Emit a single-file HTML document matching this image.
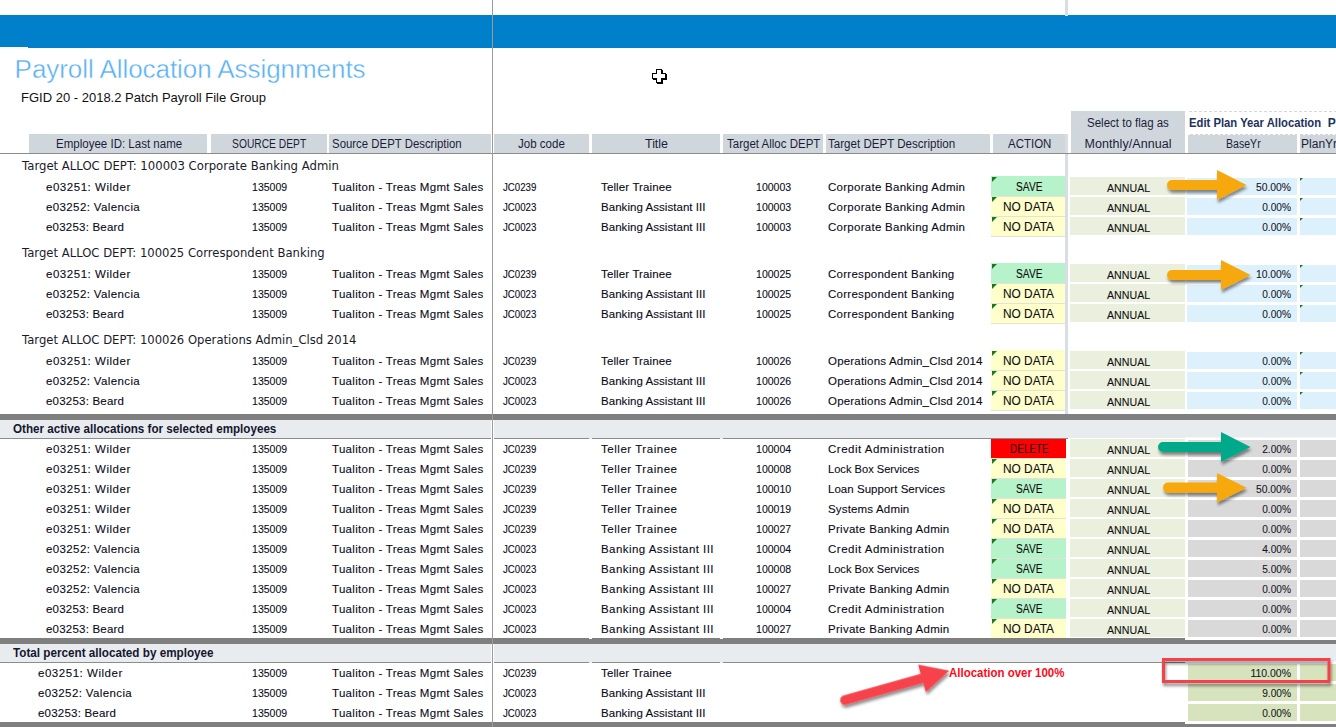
<!DOCTYPE html>
<html lang="en"><head><meta charset="utf-8"><title>Payroll Allocation Assignments</title>
<style>
html,body{margin:0;padding:0;background:#fff;}
body{width:1336px;height:727px;overflow:hidden;position:relative;font-family:"Liberation Sans",sans-serif;color:#141428;}
.a{position:absolute;white-space:pre;}
.b{position:absolute;}
.t{font-size:11.5px;line-height:20px;height:20px;color:#0a0a18;-webkit-text-stroke:0.1px #0a0a18;}
.h{font-size:12.5px;line-height:18px;height:18px;color:#1c1c3a;}
.g{font-family:"DejaVu Sans","Liberation Sans",sans-serif;font-size:13px;line-height:20px;height:20px;color:#1a1a2a;}
.s{font-size:12px;line-height:18px;color:#15152e;}
</style></head>
<body>
<div class="b" style="left:0px;top:15px;width:1336px;height:33px;background:#0080cb;"></div>
<div class="b" style="left:0px;top:47px;width:28px;height:1px;background:#fff;"></div>
<div class="b" style="left:1065px;top:0px;width:3px;height:16px;background:#d9dee4;"></div>
<div class="b" style="left:1065px;top:134px;width:3px;height:280px;background:#d9dee4;"></div>
<div class="a " style="letter-spacing:-0.056px;left:14.6px;top:53px;font-size:26px;line-height:32px;color:#58b0f4;-webkit-text-stroke:0.4px #fff;">Payroll Allocation Assignments</div>
<div class="a " style="letter-spacing:0.001px;left:21px;top:90px;font-size:13px;line-height:16px;color:#111;">FGID 20 - 2018.2 Patch Payroll File Group</div>
<div class="b" style="left:29px;top:134px;width:178px;height:19px;background:#cfd7dd;"></div>
<div class="a h" style="left:56px;transform:scaleX(0.9212);transform-origin:0.5px 50%;top:135px;font-size:12.5px;">Employee ID: Last name</div>
<div class="b" style="left:211px;top:134px;width:116px;height:19px;background:#cfd7dd;"></div>
<div class="a h" style="left:232px;transform:scaleX(0.8204);transform-origin:0.5px 50%;top:135px;font-size:12.5px;">SOURCE DEPT</div>
<div class="b" style="left:329px;top:134px;width:162px;height:19px;background:#cfd7dd;"></div>
<div class="a h" style="left:332px;transform:scaleX(0.9114);transform-origin:0.5px 50%;top:135px;font-size:12.5px;">Source DEPT Description</div>
<div class="b" style="left:494px;top:134px;width:95px;height:19px;background:#cfd7dd;"></div>
<div class="a h" style="left:517.75px;transform:scaleX(0.9233);transform-origin:0.5px 50%;top:135px;font-size:12.5px;">Job code</div>
<div class="b" style="left:592px;top:134px;width:128px;height:19px;background:#cfd7dd;"></div>
<div class="a h" style="letter-spacing:-0.039px;left:645px;top:135px;font-size:12.5px;">Title</div>
<div class="b" style="left:723px;top:134px;width:100px;height:19px;background:#cfd7dd;"></div>
<div class="a h" style="left:726.75px;transform:scaleX(0.9202);transform-origin:0.5px 50%;top:135px;font-size:12.5px;">Target Alloc DEPT</div>
<div class="b" style="left:826px;top:134px;width:164px;height:19px;background:#cfd7dd;"></div>
<div class="a h" style="left:828px;transform:scaleX(0.9255);transform-origin:0.5px 50%;top:135px;font-size:12.5px;">Target DEPT Description</div>
<div class="b" style="left:993px;top:134px;width:72px;height:19px;background:#cfd7dd;"></div>
<div class="a h" style="left:1007.5px;transform:scaleX(0.9176);transform-origin:0.5px 50%;top:135px;font-size:12.5px;">ACTION</div>
<div class="b" style="left:1188px;top:134px;width:109px;height:19px;background:#cfd7dd;"></div>
<div class="a h" style="left:1225.5px;transform:scaleX(0.8435);transform-origin:0.5px 50%;top:135px;font-size:12.5px;">BaseYr</div>
<div class="b" style="left:1300px;top:134px;width:36px;height:19px;background:#cfd7dd;"></div>
<div class="a h" style="left:1300.75px;transform:scaleX(0.9618);transform-origin:0.5px 50%;top:135px;font-size:12.5px;">PlanYr</div>
<div class="b" style="left:1071px;top:111px;width:114px;height:42px;background:#cfd7dd;"></div>
<div class="a h" style="left:1087px;transform:scaleX(0.9201);transform-origin:0.5px 50%;top:114px;font-size:12.5px;">Select to flag as</div>
<div class="a h" style="letter-spacing:0.064px;left:1084.5px;top:135px;font-size:12.5px;">Monthly/Annual</div>
<div class="b" style="left:1189px;top:111px;width:147px;height:1px;background:repeating-linear-gradient(90deg,#d3d9de 0,#d3d9de 3px,transparent 3px,transparent 5px);"></div>
<div class="b" style="left:1188px;top:134px;width:148px;height:1px;background:repeating-linear-gradient(90deg,#fff 0,#fff 2px,transparent 2px,transparent 5px);"></div>
<div class="a h" style="left:1189px;transform:scaleX(0.9387);transform-origin:0.5px 50%;top:114px;font-size:12px;font-weight:700;color:#22325c;">Edit Plan Year Allocation</div>
<div class="a h" style="left:1327.75px;top:114px;font-size:12px;font-weight:700;color:#22325c;">Pe</div>
<div class="b" style="left:0px;top:153px;width:1336px;height:1px;background:#8c8c8c;"></div>
<div class="a g" style="left:21.5px;transform:scaleX(0.8977);transform-origin:0.5px 50%;top:156px;font-size:13px;">Target ALLOC DEPT: 100003 Corporate Banking Admin</div>
<div class="a t" style="letter-spacing:0.53px;left:46px;top:177px;font-size:11.5px;">e03251: Wilder</div>
<div class="a t" style="left:252px;transform:scaleX(0.9144);transform-origin:0.5px 50%;top:177px;font-size:11.5px;">135009</div>
<div class="a t" style="letter-spacing:0.303px;left:332px;top:177px;font-size:11.5px;">Tualiton - Treas Mgmt Sales</div>
<div class="a t" style="left:502.75px;transform:scaleX(0.921);transform-origin:0.5px 50%;top:177px;font-size:10.5px;">JC0239</div>
<div class="a t" style="letter-spacing:0.131px;left:601px;top:177px;font-size:11.5px;">Teller Trainee</div>
<div class="a t" style="left:756.25px;transform:scaleX(0.9144);transform-origin:0.5px 50%;top:177px;font-size:11.5px;">100003</div>
<div class="a t" style="letter-spacing:0.27px;left:828px;top:177px;font-size:11.5px;">Corporate Banking Admin</div>
<div class="b" style="left:991px;top:196px;width:74px;height:1px;background:#e2e2da;"></div>
<div class="b" style="left:991px;top:176px;width:74px;height:20px;background:#b7f3ca;"></div>
<div class="b" style="left:992px;top:177px;width:0;height:0;border-top:5px solid #1a7a1a;border-right:5px solid transparent;"></div>
<div class="a t" style="left:1016.3px;transform:scaleX(0.8121);transform-origin:0.5px 50%;top:177px;font-size:12.5px;color:#0c0c0c;">SAVE</div>
<div class="b" style="left:1070px;top:177px;width:115px;height:18px;background:#ebefde;"></div>
<div class="a t" style="left:1107px;transform:scaleX(0.9236);transform-origin:0.5px 50%;top:178px;font-size:11.5px;color:#111;">ANNUAL</div>
<div class="b" style="left:1187px;top:178px;width:110px;height:17px;background:#ddf1fd;"></div>
<div class="b" style="left:1300px;top:178px;width:36px;height:17px;background:#ddf1fd;"></div>
<div class="a t" style="left:891.25px;width:400px;text-align:right;transform:scaleX(0.8994);transform-origin:100% 50%;top:177px;font-size:11.5px;color:#1a1a2a;">50.00%</div>
<div class="b" style="left:1300px;top:178px;width:0;height:0;border-top:3px solid #1a7a1a;border-right:3px solid transparent;"></div>
<div class="a t" style="letter-spacing:0.381px;left:46px;top:197px;font-size:11.5px;">e03252: Valencia</div>
<div class="a t" style="left:252px;transform:scaleX(0.9144);transform-origin:0.5px 50%;top:197px;font-size:11.5px;">135009</div>
<div class="a t" style="letter-spacing:0.303px;left:332px;top:197px;font-size:11.5px;">Tualiton - Treas Mgmt Sales</div>
<div class="a t" style="left:502.75px;transform:scaleX(0.921);transform-origin:0.5px 50%;top:197px;font-size:10.5px;">JC0023</div>
<div class="a t" style="letter-spacing:0.047px;left:601px;top:197px;font-size:11.5px;">Banking Assistant III</div>
<div class="a t" style="left:756.25px;transform:scaleX(0.9144);transform-origin:0.5px 50%;top:197px;font-size:11.5px;">100003</div>
<div class="a t" style="letter-spacing:0.27px;left:828px;top:197px;font-size:11.5px;">Corporate Banking Admin</div>
<div class="b" style="left:991px;top:216px;width:74px;height:1px;background:#e2e2da;"></div>
<div class="b" style="left:991px;top:197px;width:74px;height:19px;background:#ffffcc;"></div>
<div class="b" style="left:992px;top:197px;width:0;height:0;border-top:5px solid #1a7a1a;border-right:5px solid transparent;"></div>
<div class="a t" style="left:1003.45px;transform:scaleX(0.9484);transform-origin:0.5px 50%;top:197px;font-size:12.5px;color:#0c0c0c;">NO DATA</div>
<div class="b" style="left:1070px;top:197px;width:115px;height:18px;background:#ebefde;"></div>
<div class="a t" style="left:1107px;transform:scaleX(0.9236);transform-origin:0.5px 50%;top:198px;font-size:11.5px;color:#111;">ANNUAL</div>
<div class="b" style="left:1187px;top:198px;width:110px;height:17px;background:#ddf1fd;"></div>
<div class="b" style="left:1300px;top:198px;width:36px;height:17px;background:#ddf1fd;"></div>
<div class="a t" style="left:891.25px;width:400px;text-align:right;transform:scaleX(0.8844);transform-origin:100% 50%;top:197px;font-size:11.5px;color:#1a1a2a;">0.00%</div>
<div class="b" style="left:1300px;top:198px;width:0;height:0;border-top:3px solid #1a7a1a;border-right:3px solid transparent;"></div>
<div class="a t" style="letter-spacing:0.212px;left:46px;top:217px;font-size:11.5px;">e03253: Beard</div>
<div class="a t" style="left:252px;transform:scaleX(0.9144);transform-origin:0.5px 50%;top:217px;font-size:11.5px;">135009</div>
<div class="a t" style="letter-spacing:0.303px;left:332px;top:217px;font-size:11.5px;">Tualiton - Treas Mgmt Sales</div>
<div class="a t" style="left:502.75px;transform:scaleX(0.921);transform-origin:0.5px 50%;top:217px;font-size:10.5px;">JC0023</div>
<div class="a t" style="letter-spacing:0.047px;left:601px;top:217px;font-size:11.5px;">Banking Assistant III</div>
<div class="a t" style="left:756.25px;transform:scaleX(0.9144);transform-origin:0.5px 50%;top:217px;font-size:11.5px;">100003</div>
<div class="a t" style="letter-spacing:0.27px;left:828px;top:217px;font-size:11.5px;">Corporate Banking Admin</div>
<div class="b" style="left:991px;top:236px;width:74px;height:1px;background:#e2e2da;"></div>
<div class="b" style="left:991px;top:217px;width:74px;height:19px;background:#ffffcc;"></div>
<div class="b" style="left:992px;top:217px;width:0;height:0;border-top:5px solid #1a7a1a;border-right:5px solid transparent;"></div>
<div class="a t" style="left:1003.45px;transform:scaleX(0.9484);transform-origin:0.5px 50%;top:217px;font-size:12.5px;color:#0c0c0c;">NO DATA</div>
<div class="b" style="left:1070px;top:217px;width:115px;height:18px;background:#ebefde;"></div>
<div class="a t" style="left:1107px;transform:scaleX(0.9236);transform-origin:0.5px 50%;top:218px;font-size:11.5px;color:#111;">ANNUAL</div>
<div class="b" style="left:1187px;top:218px;width:110px;height:17px;background:#ddf1fd;"></div>
<div class="b" style="left:1300px;top:218px;width:36px;height:17px;background:#ddf1fd;"></div>
<div class="a t" style="left:891.25px;width:400px;text-align:right;transform:scaleX(0.8844);transform-origin:100% 50%;top:217px;font-size:11.5px;color:#1a1a2a;">0.00%</div>
<div class="b" style="left:1300px;top:218px;width:0;height:0;border-top:3px solid #1a7a1a;border-right:3px solid transparent;"></div>
<div class="a g" style="left:21.5px;transform:scaleX(0.894);transform-origin:0.5px 50%;top:243px;font-size:13px;">Target ALLOC DEPT: 100025 Correspondent Banking</div>
<div class="a t" style="letter-spacing:0.53px;left:46px;top:264px;font-size:11.5px;">e03251: Wilder</div>
<div class="a t" style="left:252px;transform:scaleX(0.9144);transform-origin:0.5px 50%;top:264px;font-size:11.5px;">135009</div>
<div class="a t" style="letter-spacing:0.303px;left:332px;top:264px;font-size:11.5px;">Tualiton - Treas Mgmt Sales</div>
<div class="a t" style="left:502.75px;transform:scaleX(0.921);transform-origin:0.5px 50%;top:264px;font-size:10.5px;">JC0239</div>
<div class="a t" style="letter-spacing:0.131px;left:601px;top:264px;font-size:11.5px;">Teller Trainee</div>
<div class="a t" style="left:756.25px;transform:scaleX(0.9144);transform-origin:0.5px 50%;top:264px;font-size:11.5px;">100025</div>
<div class="a t" style="letter-spacing:0.27px;left:828px;top:264px;font-size:11.5px;">Correspondent Banking</div>
<div class="b" style="left:991px;top:283px;width:74px;height:1px;background:#e2e2da;"></div>
<div class="b" style="left:991px;top:263px;width:74px;height:20px;background:#b7f3ca;"></div>
<div class="b" style="left:992px;top:264px;width:0;height:0;border-top:5px solid #1a7a1a;border-right:5px solid transparent;"></div>
<div class="a t" style="left:1016.3px;transform:scaleX(0.8121);transform-origin:0.5px 50%;top:264px;font-size:12.5px;color:#0c0c0c;">SAVE</div>
<div class="b" style="left:1070px;top:264px;width:115px;height:18px;background:#ebefde;"></div>
<div class="a t" style="left:1107px;transform:scaleX(0.9236);transform-origin:0.5px 50%;top:265px;font-size:11.5px;color:#111;">ANNUAL</div>
<div class="b" style="left:1187px;top:265px;width:110px;height:17px;background:#ddf1fd;"></div>
<div class="b" style="left:1300px;top:265px;width:36px;height:17px;background:#ddf1fd;"></div>
<div class="a t" style="left:891.25px;width:400px;text-align:right;transform:scaleX(0.8994);transform-origin:100% 50%;top:264px;font-size:11.5px;color:#1a1a2a;">10.00%</div>
<div class="b" style="left:1300px;top:265px;width:0;height:0;border-top:3px solid #1a7a1a;border-right:3px solid transparent;"></div>
<div class="a t" style="letter-spacing:0.381px;left:46px;top:284px;font-size:11.5px;">e03252: Valencia</div>
<div class="a t" style="left:252px;transform:scaleX(0.9144);transform-origin:0.5px 50%;top:284px;font-size:11.5px;">135009</div>
<div class="a t" style="letter-spacing:0.303px;left:332px;top:284px;font-size:11.5px;">Tualiton - Treas Mgmt Sales</div>
<div class="a t" style="left:502.75px;transform:scaleX(0.921);transform-origin:0.5px 50%;top:284px;font-size:10.5px;">JC0023</div>
<div class="a t" style="letter-spacing:0.047px;left:601px;top:284px;font-size:11.5px;">Banking Assistant III</div>
<div class="a t" style="left:756.25px;transform:scaleX(0.9144);transform-origin:0.5px 50%;top:284px;font-size:11.5px;">100025</div>
<div class="a t" style="letter-spacing:0.27px;left:828px;top:284px;font-size:11.5px;">Correspondent Banking</div>
<div class="b" style="left:991px;top:303px;width:74px;height:1px;background:#e2e2da;"></div>
<div class="b" style="left:991px;top:284px;width:74px;height:19px;background:#ffffcc;"></div>
<div class="b" style="left:992px;top:284px;width:0;height:0;border-top:5px solid #1a7a1a;border-right:5px solid transparent;"></div>
<div class="a t" style="left:1003.45px;transform:scaleX(0.9484);transform-origin:0.5px 50%;top:284px;font-size:12.5px;color:#0c0c0c;">NO DATA</div>
<div class="b" style="left:1070px;top:284px;width:115px;height:18px;background:#ebefde;"></div>
<div class="a t" style="left:1107px;transform:scaleX(0.9236);transform-origin:0.5px 50%;top:285px;font-size:11.5px;color:#111;">ANNUAL</div>
<div class="b" style="left:1187px;top:285px;width:110px;height:17px;background:#ddf1fd;"></div>
<div class="b" style="left:1300px;top:285px;width:36px;height:17px;background:#ddf1fd;"></div>
<div class="a t" style="left:891.25px;width:400px;text-align:right;transform:scaleX(0.8844);transform-origin:100% 50%;top:284px;font-size:11.5px;color:#1a1a2a;">0.00%</div>
<div class="b" style="left:1300px;top:285px;width:0;height:0;border-top:3px solid #1a7a1a;border-right:3px solid transparent;"></div>
<div class="a t" style="letter-spacing:0.212px;left:46px;top:304px;font-size:11.5px;">e03253: Beard</div>
<div class="a t" style="left:252px;transform:scaleX(0.9144);transform-origin:0.5px 50%;top:304px;font-size:11.5px;">135009</div>
<div class="a t" style="letter-spacing:0.303px;left:332px;top:304px;font-size:11.5px;">Tualiton - Treas Mgmt Sales</div>
<div class="a t" style="left:502.75px;transform:scaleX(0.921);transform-origin:0.5px 50%;top:304px;font-size:10.5px;">JC0023</div>
<div class="a t" style="letter-spacing:0.047px;left:601px;top:304px;font-size:11.5px;">Banking Assistant III</div>
<div class="a t" style="left:756.25px;transform:scaleX(0.9144);transform-origin:0.5px 50%;top:304px;font-size:11.5px;">100025</div>
<div class="a t" style="letter-spacing:0.27px;left:828px;top:304px;font-size:11.5px;">Correspondent Banking</div>
<div class="b" style="left:991px;top:323px;width:74px;height:1px;background:#e2e2da;"></div>
<div class="b" style="left:991px;top:304px;width:74px;height:19px;background:#ffffcc;"></div>
<div class="b" style="left:992px;top:304px;width:0;height:0;border-top:5px solid #1a7a1a;border-right:5px solid transparent;"></div>
<div class="a t" style="left:1003.45px;transform:scaleX(0.9484);transform-origin:0.5px 50%;top:304px;font-size:12.5px;color:#0c0c0c;">NO DATA</div>
<div class="b" style="left:1070px;top:304px;width:115px;height:18px;background:#ebefde;"></div>
<div class="a t" style="left:1107px;transform:scaleX(0.9236);transform-origin:0.5px 50%;top:305px;font-size:11.5px;color:#111;">ANNUAL</div>
<div class="b" style="left:1187px;top:305px;width:110px;height:17px;background:#ddf1fd;"></div>
<div class="b" style="left:1300px;top:305px;width:36px;height:17px;background:#ddf1fd;"></div>
<div class="a t" style="left:891.25px;width:400px;text-align:right;transform:scaleX(0.8844);transform-origin:100% 50%;top:304px;font-size:11.5px;color:#1a1a2a;">0.00%</div>
<div class="b" style="left:1300px;top:305px;width:0;height:0;border-top:3px solid #1a7a1a;border-right:3px solid transparent;"></div>
<div class="a g" style="left:21.5px;transform:scaleX(0.894);transform-origin:0.5px 50%;top:330px;font-size:13px;">Target ALLOC DEPT: 100026 Operations Admin_Clsd 2014</div>
<div class="a t" style="letter-spacing:0.53px;left:46px;top:351px;font-size:11.5px;">e03251: Wilder</div>
<div class="a t" style="left:252px;transform:scaleX(0.9144);transform-origin:0.5px 50%;top:351px;font-size:11.5px;">135009</div>
<div class="a t" style="letter-spacing:0.303px;left:332px;top:351px;font-size:11.5px;">Tualiton - Treas Mgmt Sales</div>
<div class="a t" style="left:502.75px;transform:scaleX(0.921);transform-origin:0.5px 50%;top:351px;font-size:10.5px;">JC0239</div>
<div class="a t" style="letter-spacing:0.131px;left:601px;top:351px;font-size:11.5px;">Teller Trainee</div>
<div class="a t" style="left:756.25px;transform:scaleX(0.9144);transform-origin:0.5px 50%;top:351px;font-size:11.5px;">100026</div>
<div class="a t" style="letter-spacing:0.196px;left:828px;top:351px;font-size:11.5px;">Operations Admin_Clsd 2014</div>
<div class="b" style="left:991px;top:370px;width:74px;height:1px;background:#e2e2da;"></div>
<div class="b" style="left:991px;top:350px;width:74px;height:20px;background:#ffffcc;"></div>
<div class="b" style="left:992px;top:351px;width:0;height:0;border-top:5px solid #1a7a1a;border-right:5px solid transparent;"></div>
<div class="a t" style="left:1003.45px;transform:scaleX(0.9484);transform-origin:0.5px 50%;top:351px;font-size:12.5px;color:#0c0c0c;">NO DATA</div>
<div class="b" style="left:1070px;top:351px;width:115px;height:18px;background:#ebefde;"></div>
<div class="a t" style="left:1107px;transform:scaleX(0.9236);transform-origin:0.5px 50%;top:352px;font-size:11.5px;color:#111;">ANNUAL</div>
<div class="b" style="left:1187px;top:352px;width:110px;height:17px;background:#ddf1fd;"></div>
<div class="b" style="left:1300px;top:352px;width:36px;height:17px;background:#ddf1fd;"></div>
<div class="a t" style="left:891.25px;width:400px;text-align:right;transform:scaleX(0.8844);transform-origin:100% 50%;top:351px;font-size:11.5px;color:#1a1a2a;">0.00%</div>
<div class="b" style="left:1300px;top:352px;width:0;height:0;border-top:3px solid #1a7a1a;border-right:3px solid transparent;"></div>
<div class="a t" style="letter-spacing:0.381px;left:46px;top:371px;font-size:11.5px;">e03252: Valencia</div>
<div class="a t" style="left:252px;transform:scaleX(0.9144);transform-origin:0.5px 50%;top:371px;font-size:11.5px;">135009</div>
<div class="a t" style="letter-spacing:0.303px;left:332px;top:371px;font-size:11.5px;">Tualiton - Treas Mgmt Sales</div>
<div class="a t" style="left:502.75px;transform:scaleX(0.921);transform-origin:0.5px 50%;top:371px;font-size:10.5px;">JC0023</div>
<div class="a t" style="letter-spacing:0.047px;left:601px;top:371px;font-size:11.5px;">Banking Assistant III</div>
<div class="a t" style="left:756.25px;transform:scaleX(0.9144);transform-origin:0.5px 50%;top:371px;font-size:11.5px;">100026</div>
<div class="a t" style="letter-spacing:0.196px;left:828px;top:371px;font-size:11.5px;">Operations Admin_Clsd 2014</div>
<div class="b" style="left:991px;top:390px;width:74px;height:1px;background:#e2e2da;"></div>
<div class="b" style="left:991px;top:371px;width:74px;height:19px;background:#ffffcc;"></div>
<div class="b" style="left:992px;top:371px;width:0;height:0;border-top:5px solid #1a7a1a;border-right:5px solid transparent;"></div>
<div class="a t" style="left:1003.45px;transform:scaleX(0.9484);transform-origin:0.5px 50%;top:371px;font-size:12.5px;color:#0c0c0c;">NO DATA</div>
<div class="b" style="left:1070px;top:371px;width:115px;height:18px;background:#ebefde;"></div>
<div class="a t" style="left:1107px;transform:scaleX(0.9236);transform-origin:0.5px 50%;top:372px;font-size:11.5px;color:#111;">ANNUAL</div>
<div class="b" style="left:1187px;top:372px;width:110px;height:17px;background:#ddf1fd;"></div>
<div class="b" style="left:1300px;top:372px;width:36px;height:17px;background:#ddf1fd;"></div>
<div class="a t" style="left:891.25px;width:400px;text-align:right;transform:scaleX(0.8844);transform-origin:100% 50%;top:371px;font-size:11.5px;color:#1a1a2a;">0.00%</div>
<div class="b" style="left:1300px;top:372px;width:0;height:0;border-top:3px solid #1a7a1a;border-right:3px solid transparent;"></div>
<div class="a t" style="letter-spacing:0.212px;left:46px;top:391px;font-size:11.5px;">e03253: Beard</div>
<div class="a t" style="left:252px;transform:scaleX(0.9144);transform-origin:0.5px 50%;top:391px;font-size:11.5px;">135009</div>
<div class="a t" style="letter-spacing:0.303px;left:332px;top:391px;font-size:11.5px;">Tualiton - Treas Mgmt Sales</div>
<div class="a t" style="left:502.75px;transform:scaleX(0.921);transform-origin:0.5px 50%;top:391px;font-size:10.5px;">JC0023</div>
<div class="a t" style="letter-spacing:0.047px;left:601px;top:391px;font-size:11.5px;">Banking Assistant III</div>
<div class="a t" style="left:756.25px;transform:scaleX(0.9144);transform-origin:0.5px 50%;top:391px;font-size:11.5px;">100026</div>
<div class="a t" style="letter-spacing:0.196px;left:828px;top:391px;font-size:11.5px;">Operations Admin_Clsd 2014</div>
<div class="b" style="left:991px;top:410px;width:74px;height:1px;background:#e2e2da;"></div>
<div class="b" style="left:991px;top:391px;width:74px;height:19px;background:#ffffcc;"></div>
<div class="b" style="left:992px;top:391px;width:0;height:0;border-top:5px solid #1a7a1a;border-right:5px solid transparent;"></div>
<div class="a t" style="left:1003.45px;transform:scaleX(0.9484);transform-origin:0.5px 50%;top:391px;font-size:12.5px;color:#0c0c0c;">NO DATA</div>
<div class="b" style="left:1070px;top:391px;width:115px;height:18px;background:#ebefde;"></div>
<div class="a t" style="left:1107px;transform:scaleX(0.9236);transform-origin:0.5px 50%;top:392px;font-size:11.5px;color:#111;">ANNUAL</div>
<div class="b" style="left:1187px;top:392px;width:110px;height:17px;background:#ddf1fd;"></div>
<div class="b" style="left:1300px;top:392px;width:36px;height:17px;background:#ddf1fd;"></div>
<div class="a t" style="left:891.25px;width:400px;text-align:right;transform:scaleX(0.8844);transform-origin:100% 50%;top:391px;font-size:11.5px;color:#1a1a2a;">0.00%</div>
<div class="b" style="left:1300px;top:392px;width:0;height:0;border-top:3px solid #1a7a1a;border-right:3px solid transparent;"></div>
<div class="b" style="left:0px;top:420px;width:1068px;height:19px;background:#e9ecef;"></div>
<div class="b" style="left:1068px;top:420px;width:268px;height:18px;background:#e9ecef;"></div>
<div class="b" style="left:1185px;top:437px;width:151px;height:1px;background:#f4f5f7;"></div>
<div class="b" style="left:0px;top:414px;width:1336px;height:6px;background:#7f7f7f;"></div>
<div class="b" style="left:0px;top:438px;width:1068px;height:1px;background:#8c8c8c;"></div>
<div class="b" style="left:491px;top:420px;width:3px;height:19px;background:#fff;"></div>
<div class="b" style="left:589px;top:438px;width:3px;height:1px;background:#e9ecef;"></div>
<div class="b" style="left:720px;top:438px;width:3px;height:1px;background:#e9ecef;"></div>
<div class="a s" style="left:13px;transform:scaleX(0.9701);transform-origin:0.5px 50%;top:420px;font-size:12px;font-weight:700;">Other active allocations for selected employees</div>
<div class="a t" style="letter-spacing:0.53px;left:46px;top:439px;font-size:11.5px;">e03251: Wilder</div>
<div class="a t" style="left:252px;transform:scaleX(0.9144);transform-origin:0.5px 50%;top:439px;font-size:11.5px;">135009</div>
<div class="a t" style="letter-spacing:0.303px;left:332px;top:439px;font-size:11.5px;">Tualiton - Treas Mgmt Sales</div>
<div class="a t" style="left:502.75px;transform:scaleX(0.921);transform-origin:0.5px 50%;top:439px;font-size:10.5px;">JC0239</div>
<div class="a t" style="letter-spacing:0.535px;left:601px;top:439px;font-size:11.5px;">Teller Trainee</div>
<div class="a t" style="left:756.25px;transform:scaleX(0.9144);transform-origin:0.5px 50%;top:439px;font-size:11.5px;">100004</div>
<div class="a t" style="letter-spacing:0.507px;left:828px;top:439px;font-size:11.5px;">Credit Administration</div>
<div class="b" style="left:991px;top:458px;width:75px;height:1px;background:#e2e2da;"></div>
<div class="b" style="left:991px;top:439px;width:75px;height:19px;background:#ff0000;"></div>
<div class="a t" style="left:1009.75px;transform:scaleX(0.7932);transform-origin:0.5px 50%;top:439px;font-size:12.5px;color:#2a0000;">DELETE</div>
<div class="b" style="left:1070px;top:439px;width:115px;height:18px;background:#ebefde;"></div>
<div class="a t" style="left:1107px;transform:scaleX(0.9236);transform-origin:0.5px 50%;top:440px;font-size:11.5px;color:#111;">ANNUAL</div>
<div class="b" style="left:1188px;top:440px;width:109px;height:17px;background:#d9d9d9;"></div>
<div class="b" style="left:1300px;top:440px;width:36px;height:17px;background:#d9d9d9;"></div>
<div class="a t" style="left:891.25px;width:400px;text-align:right;transform:scaleX(0.8844);transform-origin:100% 50%;top:439px;font-size:11.5px;color:#1a1a2a;">2.00%</div>
<div class="a t" style="letter-spacing:0.53px;left:46px;top:459px;font-size:11.5px;">e03251: Wilder</div>
<div class="a t" style="left:252px;transform:scaleX(0.9144);transform-origin:0.5px 50%;top:459px;font-size:11.5px;">135009</div>
<div class="a t" style="letter-spacing:0.303px;left:332px;top:459px;font-size:11.5px;">Tualiton - Treas Mgmt Sales</div>
<div class="a t" style="left:502.75px;transform:scaleX(0.921);transform-origin:0.5px 50%;top:459px;font-size:10.5px;">JC0239</div>
<div class="a t" style="letter-spacing:0.535px;left:601px;top:459px;font-size:11.5px;">Teller Trainee</div>
<div class="a t" style="left:756.25px;transform:scaleX(0.9144);transform-origin:0.5px 50%;top:459px;font-size:11.5px;">100008</div>
<div class="a t" style="left:828px;transform:scaleX(0.9655);transform-origin:0.5px 50%;top:459px;font-size:11.5px;">Lock Box Services</div>
<div class="b" style="left:991px;top:478px;width:75px;height:1px;background:#e2e2da;"></div>
<div class="b" style="left:991px;top:459px;width:75px;height:19px;background:#ffffcc;"></div>
<div class="b" style="left:992px;top:459px;width:0;height:0;border-top:5px solid #1a7a1a;border-right:5px solid transparent;"></div>
<div class="a t" style="left:1003.45px;transform:scaleX(0.9484);transform-origin:0.5px 50%;top:459px;font-size:12.5px;color:#0c0c0c;">NO DATA</div>
<div class="b" style="left:1070px;top:459px;width:115px;height:18px;background:#ebefde;"></div>
<div class="a t" style="left:1107px;transform:scaleX(0.9236);transform-origin:0.5px 50%;top:460px;font-size:11.5px;color:#111;">ANNUAL</div>
<div class="b" style="left:1188px;top:460px;width:109px;height:17px;background:#d9d9d9;"></div>
<div class="b" style="left:1300px;top:460px;width:36px;height:17px;background:#d9d9d9;"></div>
<div class="a t" style="left:891.25px;width:400px;text-align:right;transform:scaleX(0.8844);transform-origin:100% 50%;top:459px;font-size:11.5px;color:#1a1a2a;">0.00%</div>
<div class="a t" style="letter-spacing:0.53px;left:46px;top:479px;font-size:11.5px;">e03251: Wilder</div>
<div class="a t" style="left:252px;transform:scaleX(0.9144);transform-origin:0.5px 50%;top:479px;font-size:11.5px;">135009</div>
<div class="a t" style="letter-spacing:0.303px;left:332px;top:479px;font-size:11.5px;">Tualiton - Treas Mgmt Sales</div>
<div class="a t" style="left:502.75px;transform:scaleX(0.921);transform-origin:0.5px 50%;top:479px;font-size:10.5px;">JC0239</div>
<div class="a t" style="letter-spacing:0.535px;left:601px;top:479px;font-size:11.5px;">Teller Trainee</div>
<div class="a t" style="left:756.25px;transform:scaleX(0.9144);transform-origin:0.5px 50%;top:479px;font-size:11.5px;">100010</div>
<div class="a t" style="letter-spacing:0.032px;left:828px;top:479px;font-size:11.5px;">Loan Support Services</div>
<div class="b" style="left:991px;top:498px;width:75px;height:1px;background:#e2e2da;"></div>
<div class="b" style="left:991px;top:479px;width:75px;height:19px;background:#b7f3ca;"></div>
<div class="b" style="left:992px;top:479px;width:0;height:0;border-top:5px solid #1a7a1a;border-right:5px solid transparent;"></div>
<div class="a t" style="left:1016.3px;transform:scaleX(0.8121);transform-origin:0.5px 50%;top:479px;font-size:12.5px;color:#0c0c0c;">SAVE</div>
<div class="b" style="left:1070px;top:479px;width:115px;height:18px;background:#ebefde;"></div>
<div class="a t" style="left:1107px;transform:scaleX(0.9236);transform-origin:0.5px 50%;top:480px;font-size:11.5px;color:#111;">ANNUAL</div>
<div class="b" style="left:1188px;top:480px;width:109px;height:17px;background:#d9d9d9;"></div>
<div class="b" style="left:1300px;top:480px;width:36px;height:17px;background:#d9d9d9;"></div>
<div class="a t" style="left:891.25px;width:400px;text-align:right;transform:scaleX(0.8994);transform-origin:100% 50%;top:479px;font-size:11.5px;color:#1a1a2a;">50.00%</div>
<div class="a t" style="letter-spacing:0.53px;left:46px;top:499px;font-size:11.5px;">e03251: Wilder</div>
<div class="a t" style="left:252px;transform:scaleX(0.9144);transform-origin:0.5px 50%;top:499px;font-size:11.5px;">135009</div>
<div class="a t" style="letter-spacing:0.303px;left:332px;top:499px;font-size:11.5px;">Tualiton - Treas Mgmt Sales</div>
<div class="a t" style="left:502.75px;transform:scaleX(0.921);transform-origin:0.5px 50%;top:499px;font-size:10.5px;">JC0239</div>
<div class="a t" style="letter-spacing:0.535px;left:601px;top:499px;font-size:11.5px;">Teller Trainee</div>
<div class="a t" style="left:756.25px;transform:scaleX(0.9144);transform-origin:0.5px 50%;top:499px;font-size:11.5px;">100019</div>
<div class="a t" style="letter-spacing:0.167px;left:828px;top:499px;font-size:11.5px;">Systems Admin</div>
<div class="b" style="left:991px;top:518px;width:75px;height:1px;background:#e2e2da;"></div>
<div class="b" style="left:991px;top:499px;width:75px;height:19px;background:#ffffcc;"></div>
<div class="b" style="left:992px;top:499px;width:0;height:0;border-top:5px solid #1a7a1a;border-right:5px solid transparent;"></div>
<div class="a t" style="left:1003.45px;transform:scaleX(0.9484);transform-origin:0.5px 50%;top:499px;font-size:12.5px;color:#0c0c0c;">NO DATA</div>
<div class="b" style="left:1070px;top:499px;width:115px;height:18px;background:#ebefde;"></div>
<div class="a t" style="left:1107px;transform:scaleX(0.9236);transform-origin:0.5px 50%;top:500px;font-size:11.5px;color:#111;">ANNUAL</div>
<div class="b" style="left:1188px;top:500px;width:109px;height:17px;background:#d9d9d9;"></div>
<div class="b" style="left:1300px;top:500px;width:36px;height:17px;background:#d9d9d9;"></div>
<div class="a t" style="left:891.25px;width:400px;text-align:right;transform:scaleX(0.8844);transform-origin:100% 50%;top:499px;font-size:11.5px;color:#1a1a2a;">0.00%</div>
<div class="a t" style="letter-spacing:0.53px;left:46px;top:519px;font-size:11.5px;">e03251: Wilder</div>
<div class="a t" style="left:252px;transform:scaleX(0.9144);transform-origin:0.5px 50%;top:519px;font-size:11.5px;">135009</div>
<div class="a t" style="letter-spacing:0.303px;left:332px;top:519px;font-size:11.5px;">Tualiton - Treas Mgmt Sales</div>
<div class="a t" style="left:502.75px;transform:scaleX(0.921);transform-origin:0.5px 50%;top:519px;font-size:10.5px;">JC0239</div>
<div class="a t" style="letter-spacing:0.535px;left:601px;top:519px;font-size:11.5px;">Teller Trainee</div>
<div class="a t" style="left:756.25px;transform:scaleX(0.9144);transform-origin:0.5px 50%;top:519px;font-size:11.5px;">100027</div>
<div class="a t" style="letter-spacing:0.277px;left:828px;top:519px;font-size:11.5px;">Private Banking Admin</div>
<div class="b" style="left:991px;top:538px;width:75px;height:1px;background:#e2e2da;"></div>
<div class="b" style="left:991px;top:519px;width:75px;height:19px;background:#ffffcc;"></div>
<div class="b" style="left:992px;top:519px;width:0;height:0;border-top:5px solid #1a7a1a;border-right:5px solid transparent;"></div>
<div class="a t" style="left:1003.45px;transform:scaleX(0.9484);transform-origin:0.5px 50%;top:519px;font-size:12.5px;color:#0c0c0c;">NO DATA</div>
<div class="b" style="left:1070px;top:519px;width:115px;height:18px;background:#ebefde;"></div>
<div class="a t" style="left:1107px;transform:scaleX(0.9236);transform-origin:0.5px 50%;top:520px;font-size:11.5px;color:#111;">ANNUAL</div>
<div class="b" style="left:1188px;top:520px;width:109px;height:17px;background:#d9d9d9;"></div>
<div class="b" style="left:1300px;top:520px;width:36px;height:17px;background:#d9d9d9;"></div>
<div class="a t" style="left:891.25px;width:400px;text-align:right;transform:scaleX(0.8844);transform-origin:100% 50%;top:519px;font-size:11.5px;color:#1a1a2a;">0.00%</div>
<div class="a t" style="letter-spacing:0.381px;left:46px;top:539px;font-size:11.5px;">e03252: Valencia</div>
<div class="a t" style="left:252px;transform:scaleX(0.9144);transform-origin:0.5px 50%;top:539px;font-size:11.5px;">135009</div>
<div class="a t" style="letter-spacing:0.303px;left:332px;top:539px;font-size:11.5px;">Tualiton - Treas Mgmt Sales</div>
<div class="a t" style="left:502.75px;transform:scaleX(0.921);transform-origin:0.5px 50%;top:539px;font-size:10.5px;">JC0023</div>
<div class="a t" style="letter-spacing:0.447px;left:601px;top:539px;font-size:11.5px;">Banking Assistant III</div>
<div class="a t" style="left:756.25px;transform:scaleX(0.9144);transform-origin:0.5px 50%;top:539px;font-size:11.5px;">100004</div>
<div class="a t" style="letter-spacing:0.507px;left:828px;top:539px;font-size:11.5px;">Credit Administration</div>
<div class="b" style="left:991px;top:558px;width:75px;height:1px;background:#e2e2da;"></div>
<div class="b" style="left:991px;top:539px;width:75px;height:19px;background:#b7f3ca;"></div>
<div class="b" style="left:992px;top:539px;width:0;height:0;border-top:5px solid #1a7a1a;border-right:5px solid transparent;"></div>
<div class="a t" style="left:1016.3px;transform:scaleX(0.8121);transform-origin:0.5px 50%;top:539px;font-size:12.5px;color:#0c0c0c;">SAVE</div>
<div class="b" style="left:1070px;top:539px;width:115px;height:18px;background:#ebefde;"></div>
<div class="a t" style="left:1107px;transform:scaleX(0.9236);transform-origin:0.5px 50%;top:540px;font-size:11.5px;color:#111;">ANNUAL</div>
<div class="b" style="left:1188px;top:540px;width:109px;height:17px;background:#d9d9d9;"></div>
<div class="b" style="left:1300px;top:540px;width:36px;height:17px;background:#d9d9d9;"></div>
<div class="a t" style="left:891.25px;width:400px;text-align:right;transform:scaleX(0.8844);transform-origin:100% 50%;top:539px;font-size:11.5px;color:#1a1a2a;">4.00%</div>
<div class="a t" style="letter-spacing:0.381px;left:46px;top:559px;font-size:11.5px;">e03252: Valencia</div>
<div class="a t" style="left:252px;transform:scaleX(0.9144);transform-origin:0.5px 50%;top:559px;font-size:11.5px;">135009</div>
<div class="a t" style="letter-spacing:0.303px;left:332px;top:559px;font-size:11.5px;">Tualiton - Treas Mgmt Sales</div>
<div class="a t" style="left:502.75px;transform:scaleX(0.921);transform-origin:0.5px 50%;top:559px;font-size:10.5px;">JC0023</div>
<div class="a t" style="letter-spacing:0.447px;left:601px;top:559px;font-size:11.5px;">Banking Assistant III</div>
<div class="a t" style="left:756.25px;transform:scaleX(0.9144);transform-origin:0.5px 50%;top:559px;font-size:11.5px;">100008</div>
<div class="a t" style="left:828px;transform:scaleX(0.9655);transform-origin:0.5px 50%;top:559px;font-size:11.5px;">Lock Box Services</div>
<div class="b" style="left:991px;top:578px;width:75px;height:1px;background:#e2e2da;"></div>
<div class="b" style="left:991px;top:559px;width:75px;height:19px;background:#b7f3ca;"></div>
<div class="b" style="left:992px;top:559px;width:0;height:0;border-top:5px solid #1a7a1a;border-right:5px solid transparent;"></div>
<div class="a t" style="left:1016.3px;transform:scaleX(0.8121);transform-origin:0.5px 50%;top:559px;font-size:12.5px;color:#0c0c0c;">SAVE</div>
<div class="b" style="left:1070px;top:559px;width:115px;height:18px;background:#ebefde;"></div>
<div class="a t" style="left:1107px;transform:scaleX(0.9236);transform-origin:0.5px 50%;top:560px;font-size:11.5px;color:#111;">ANNUAL</div>
<div class="b" style="left:1188px;top:560px;width:109px;height:17px;background:#d9d9d9;"></div>
<div class="b" style="left:1300px;top:560px;width:36px;height:17px;background:#d9d9d9;"></div>
<div class="a t" style="left:891.25px;width:400px;text-align:right;transform:scaleX(0.8844);transform-origin:100% 50%;top:559px;font-size:11.5px;color:#1a1a2a;">5.00%</div>
<div class="a t" style="letter-spacing:0.381px;left:46px;top:579px;font-size:11.5px;">e03252: Valencia</div>
<div class="a t" style="left:252px;transform:scaleX(0.9144);transform-origin:0.5px 50%;top:579px;font-size:11.5px;">135009</div>
<div class="a t" style="letter-spacing:0.303px;left:332px;top:579px;font-size:11.5px;">Tualiton - Treas Mgmt Sales</div>
<div class="a t" style="left:502.75px;transform:scaleX(0.921);transform-origin:0.5px 50%;top:579px;font-size:10.5px;">JC0023</div>
<div class="a t" style="letter-spacing:0.447px;left:601px;top:579px;font-size:11.5px;">Banking Assistant III</div>
<div class="a t" style="left:756.25px;transform:scaleX(0.9144);transform-origin:0.5px 50%;top:579px;font-size:11.5px;">100027</div>
<div class="a t" style="letter-spacing:0.277px;left:828px;top:579px;font-size:11.5px;">Private Banking Admin</div>
<div class="b" style="left:991px;top:598px;width:75px;height:1px;background:#e2e2da;"></div>
<div class="b" style="left:991px;top:579px;width:75px;height:19px;background:#ffffcc;"></div>
<div class="b" style="left:992px;top:579px;width:0;height:0;border-top:5px solid #1a7a1a;border-right:5px solid transparent;"></div>
<div class="a t" style="left:1003.45px;transform:scaleX(0.9484);transform-origin:0.5px 50%;top:579px;font-size:12.5px;color:#0c0c0c;">NO DATA</div>
<div class="b" style="left:1070px;top:579px;width:115px;height:18px;background:#ebefde;"></div>
<div class="a t" style="left:1107px;transform:scaleX(0.9236);transform-origin:0.5px 50%;top:580px;font-size:11.5px;color:#111;">ANNUAL</div>
<div class="b" style="left:1188px;top:580px;width:109px;height:17px;background:#d9d9d9;"></div>
<div class="b" style="left:1300px;top:580px;width:36px;height:17px;background:#d9d9d9;"></div>
<div class="a t" style="left:891.25px;width:400px;text-align:right;transform:scaleX(0.8844);transform-origin:100% 50%;top:579px;font-size:11.5px;color:#1a1a2a;">0.00%</div>
<div class="a t" style="letter-spacing:0.212px;left:46px;top:599px;font-size:11.5px;">e03253: Beard</div>
<div class="a t" style="left:252px;transform:scaleX(0.9144);transform-origin:0.5px 50%;top:599px;font-size:11.5px;">135009</div>
<div class="a t" style="letter-spacing:0.303px;left:332px;top:599px;font-size:11.5px;">Tualiton - Treas Mgmt Sales</div>
<div class="a t" style="left:502.75px;transform:scaleX(0.921);transform-origin:0.5px 50%;top:599px;font-size:10.5px;">JC0023</div>
<div class="a t" style="letter-spacing:0.447px;left:601px;top:599px;font-size:11.5px;">Banking Assistant III</div>
<div class="a t" style="left:756.25px;transform:scaleX(0.9144);transform-origin:0.5px 50%;top:599px;font-size:11.5px;">100004</div>
<div class="a t" style="letter-spacing:0.507px;left:828px;top:599px;font-size:11.5px;">Credit Administration</div>
<div class="b" style="left:991px;top:618px;width:75px;height:1px;background:#e2e2da;"></div>
<div class="b" style="left:991px;top:599px;width:75px;height:19px;background:#b7f3ca;"></div>
<div class="b" style="left:992px;top:599px;width:0;height:0;border-top:5px solid #1a7a1a;border-right:5px solid transparent;"></div>
<div class="a t" style="left:1016.3px;transform:scaleX(0.8121);transform-origin:0.5px 50%;top:599px;font-size:12.5px;color:#0c0c0c;">SAVE</div>
<div class="b" style="left:1070px;top:599px;width:115px;height:18px;background:#ebefde;"></div>
<div class="a t" style="left:1107px;transform:scaleX(0.9236);transform-origin:0.5px 50%;top:600px;font-size:11.5px;color:#111;">ANNUAL</div>
<div class="b" style="left:1188px;top:600px;width:109px;height:17px;background:#d9d9d9;"></div>
<div class="b" style="left:1300px;top:600px;width:36px;height:17px;background:#d9d9d9;"></div>
<div class="a t" style="left:891.25px;width:400px;text-align:right;transform:scaleX(0.8844);transform-origin:100% 50%;top:599px;font-size:11.5px;color:#1a1a2a;">0.00%</div>
<div class="a t" style="letter-spacing:0.212px;left:46px;top:619px;font-size:11.5px;">e03253: Beard</div>
<div class="a t" style="left:252px;transform:scaleX(0.9144);transform-origin:0.5px 50%;top:619px;font-size:11.5px;">135009</div>
<div class="a t" style="letter-spacing:0.303px;left:332px;top:619px;font-size:11.5px;">Tualiton - Treas Mgmt Sales</div>
<div class="a t" style="left:502.75px;transform:scaleX(0.921);transform-origin:0.5px 50%;top:619px;font-size:10.5px;">JC0023</div>
<div class="a t" style="letter-spacing:0.447px;left:601px;top:619px;font-size:11.5px;">Banking Assistant III</div>
<div class="a t" style="left:756.25px;transform:scaleX(0.9144);transform-origin:0.5px 50%;top:619px;font-size:11.5px;">100027</div>
<div class="a t" style="letter-spacing:0.277px;left:828px;top:619px;font-size:11.5px;">Private Banking Admin</div>
<div class="b" style="left:991px;top:638px;width:75px;height:1px;background:#e2e2da;"></div>
<div class="b" style="left:991px;top:619px;width:75px;height:19px;background:#ffffcc;"></div>
<div class="b" style="left:992px;top:619px;width:0;height:0;border-top:5px solid #1a7a1a;border-right:5px solid transparent;"></div>
<div class="a t" style="left:1003.45px;transform:scaleX(0.9484);transform-origin:0.5px 50%;top:619px;font-size:12.5px;color:#0c0c0c;">NO DATA</div>
<div class="b" style="left:1070px;top:619px;width:115px;height:18px;background:#ebefde;"></div>
<div class="a t" style="left:1107px;transform:scaleX(0.9236);transform-origin:0.5px 50%;top:620px;font-size:11.5px;color:#111;">ANNUAL</div>
<div class="b" style="left:1188px;top:620px;width:109px;height:17px;background:#d9d9d9;"></div>
<div class="b" style="left:1300px;top:620px;width:36px;height:17px;background:#d9d9d9;"></div>
<div class="a t" style="left:891.25px;width:400px;text-align:right;transform:scaleX(0.8844);transform-origin:100% 50%;top:619px;font-size:11.5px;color:#1a1a2a;">0.00%</div>
<div class="b" style="left:0px;top:644px;width:1068px;height:19px;background:#e9ecef;"></div>
<div class="b" style="left:1068px;top:644px;width:268px;height:18px;background:#e9ecef;"></div>
<div class="b" style="left:1185px;top:661px;width:151px;height:1px;background:#f4f5f7;"></div>
<div class="b" style="left:0px;top:638px;width:1336px;height:6px;background:#7f7f7f;"></div>
<div class="b" style="left:0px;top:662px;width:1185px;height:1px;background:#8c8c8c;"></div>
<div class="b" style="left:1185px;top:638px;width:151px;height:2px;background:#fff;"></div>
<div class="b" style="left:491px;top:644px;width:3px;height:19px;background:#fff;"></div>
<div class="b" style="left:589px;top:662px;width:3px;height:1px;background:#e9ecef;"></div>
<div class="b" style="left:589px;top:638px;width:3px;height:1px;background:#fff;"></div>
<div class="b" style="left:720px;top:662px;width:3px;height:1px;background:#e9ecef;"></div>
<div class="b" style="left:720px;top:638px;width:3px;height:1px;background:#fff;"></div>
<div class="a s" style="left:13px;transform:scaleX(0.9745);transform-origin:0.5px 50%;top:644px;font-size:12px;font-weight:700;">Total percent allocated by employee</div>
<div class="a t" style="letter-spacing:0.53px;left:38px;top:663px;font-size:11.5px;">e03251: Wilder</div>
<div class="a t" style="left:252px;transform:scaleX(0.9144);transform-origin:0.5px 50%;top:663px;font-size:11.5px;">135009</div>
<div class="a t" style="letter-spacing:0.303px;left:332px;top:663px;font-size:11.5px;">Tualiton - Treas Mgmt Sales</div>
<div class="a t" style="left:502.75px;transform:scaleX(0.921);transform-origin:0.5px 50%;top:663px;font-size:10.5px;">JC0239</div>
<div class="a t" style="letter-spacing:0.131px;left:601px;top:663px;font-size:11.5px;">Teller Trainee</div>
<div class="b" style="left:1188px;top:664px;width:109px;height:17px;background:#d7e3bc;"></div>
<div class="b" style="left:1300px;top:664px;width:36px;height:17px;background:#d7e3bc;"></div>
<div class="a t" style="left:891.25px;width:400px;text-align:right;transform:scaleX(0.9112);transform-origin:100% 50%;top:663px;font-size:11.5px;color:#1a1a2a;">110.00%</div>
<div class="a t" style="letter-spacing:0.381px;left:38px;top:683px;font-size:11.5px;">e03252: Valencia</div>
<div class="a t" style="left:252px;transform:scaleX(0.9144);transform-origin:0.5px 50%;top:683px;font-size:11.5px;">135009</div>
<div class="a t" style="letter-spacing:0.303px;left:332px;top:683px;font-size:11.5px;">Tualiton - Treas Mgmt Sales</div>
<div class="a t" style="left:502.75px;transform:scaleX(0.921);transform-origin:0.5px 50%;top:683px;font-size:10.5px;">JC0023</div>
<div class="a t" style="letter-spacing:0.047px;left:601px;top:683px;font-size:11.5px;">Banking Assistant III</div>
<div class="b" style="left:1188px;top:684px;width:109px;height:17px;background:#d7e3bc;"></div>
<div class="b" style="left:1300px;top:684px;width:36px;height:17px;background:#d7e3bc;"></div>
<div class="a t" style="left:891.25px;width:400px;text-align:right;transform:scaleX(0.8844);transform-origin:100% 50%;top:683px;font-size:11.5px;color:#1a1a2a;">9.00%</div>
<div class="a t" style="letter-spacing:0.212px;left:38px;top:703px;font-size:11.5px;">e03253: Beard</div>
<div class="a t" style="left:252px;transform:scaleX(0.9144);transform-origin:0.5px 50%;top:703px;font-size:11.5px;">135009</div>
<div class="a t" style="letter-spacing:0.303px;left:332px;top:703px;font-size:11.5px;">Tualiton - Treas Mgmt Sales</div>
<div class="a t" style="left:502.75px;transform:scaleX(0.921);transform-origin:0.5px 50%;top:703px;font-size:10.5px;">JC0023</div>
<div class="a t" style="letter-spacing:0.047px;left:601px;top:703px;font-size:11.5px;">Banking Assistant III</div>
<div class="b" style="left:1188px;top:704px;width:109px;height:17px;background:#d7e3bc;"></div>
<div class="b" style="left:1300px;top:704px;width:36px;height:17px;background:#d7e3bc;"></div>
<div class="a t" style="left:891.25px;width:400px;text-align:right;transform:scaleX(0.8844);transform-origin:100% 50%;top:703px;font-size:11.5px;color:#1a1a2a;">0.00%</div>
<div class="b" style="left:0px;top:722px;width:1185px;height:5px;background:#7f7f7f;"></div>
<div class="b" style="left:1185px;top:724px;width:151px;height:3px;background:#7f7f7f;"></div>
<div class="a s" style="left:948.5px;transform:scaleX(0.9555);transform-origin:0.5px 50%;top:663px;font-size:12px;font-weight:700;color:#ff0a1a;line-height:20px;">Allocation over 100%</div>
<div class="b" style="left:492px;top:0px;width:1px;height:727px;background:#9b9b9b;"></div>
<svg class="b" style="left:0;top:0" width="1336" height="727" viewBox="0 0 1336 727">
<defs><filter id="sh" x="-10%" y="-20%" width="120%" height="150%"><feGaussianBlur in="SourceAlpha" stdDeviation="1.6"/><feOffset dx="0.5" dy="2.5"/><feComponentTransfer><feFuncA type="linear" slope=".45"/></feComponentTransfer><feMerge><feMergeNode/><feMergeNode in="SourceGraphic"/></feMerge></filter></defs>
<g filter="url(#sh)">
<path d="M1172 180 H1217 V170 L1246.500 185 L1217 200 V190 H1172 a5 5 0 0 1 0 -10z" fill="#f7a80c"/>
<path d="M1172 270 H1221 V260 L1250.500 275 L1221 290 V280 H1172 a5 5 0 0 1 0 -10z" fill="#f7a80c"/>
<path d="M1163 442 H1221 V432 L1250.500 447 L1221 462 V452 H1163 a5 5 0 0 1 0 -10z" fill="#06a98a"/>
<path d="M1168 482.500 H1217 V473 L1246.500 487.700 L1217 502.500 V492.500 H1168 a5 5 0 0 1 0 -10z" fill="#f7a80c"/>
<g transform="translate(845,700) rotate(-15.700)"><path d="M0 -4.800 H80 V-14.200 L108.400 0 L80 14.200 V4.800 H0 a4.800 4.800 0 0 1 0 -9.600z" fill="#f7434b"/></g>
<rect x="1163.500" y="659.500" width="165.500" height="22" fill="none" stroke="#f5424a" stroke-width="3"/>
</g>
<g shape-rendering="crispEdges"><path d="M657 70h6v4h4v6h-4v4h-6v-4h-4v-6h4z" fill="#000"/><path d="M656 69h6v4h4v6h-4v4h-6v-4h-4v-6h4z" fill="#000"/><path d="M657 70h4v4h4v4h-4v4h-4v-4h-4v-4h4z" fill="#fff"/></g>
</svg>
</body></html>
